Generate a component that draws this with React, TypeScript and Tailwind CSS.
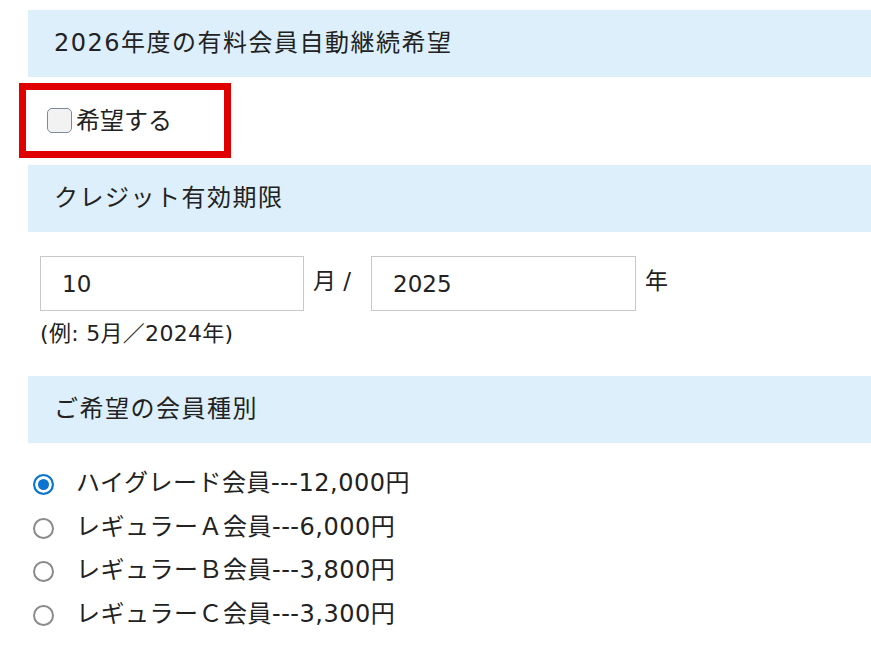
import { useState } from "react";

const plans = [
  { id: "high", label: "ハイグレード会員---12,000円" },
  { id: "a", label: "レギュラーＡ会員---6,000円" },
  { id: "b", label: "レギュラーＢ会員---3,800円" },
  { id: "c", label: "レギュラーＣ会員---3,300円" },
];

function SectionHead({ children }: { children: React.ReactNode }) {
  return (
    <div className="flex h-[67px] items-center bg-[#ddeffa] pb-[2px] pl-[26px] text-[24px] tracking-[1.5px] text-[#222]">
      {children}
    </div>
  );
}

export default function App() {
  const [wish, setWish] = useState(false);
  const [month, setMonth] = useState("10");
  const [year, setYear] = useState("2025");
  const [plan, setPlan] = useState("high");

  return (
    <div
      className="min-h-[645px] w-[871px] overflow-hidden bg-white pl-[28px] pt-[10px] text-[#222]"
      style={{ fontFamily: '"DejaVu Sans", "Noto Sans CJK JP", sans-serif' }}
    >
      <SectionHead>2026年度の有料会員自動継続希望</SectionHead>

      {/* 希望する（赤枠） */}
      <div className="mt-[6px] -ml-[9px] flex h-[75px] w-[212px] items-center border-[7px] border-[#e00000] pl-[21px]">
        <label className="flex cursor-pointer items-center gap-[4px] text-[24px]">
          <input
            type="checkbox"
            checked={wish}
            onChange={(e) => setWish(e.target.checked)}
            className="h-[25px] w-[25px] appearance-none rounded-[5px] border border-[#7a8a9a] bg-[#f2f2f2] checked:bg-[#0a74d0]"
          />
          <span>希望する</span>
        </label>
      </div>

      <div className="mt-[7px]">
        <SectionHead>クレジット有効期限</SectionHead>
      </div>

      <div className="mt-[24px] ml-[12px] flex items-center text-[23px]">
        <input
          value={month}
          onChange={(e) => setMonth(e.target.value)}
          className="h-[55px] w-[264px] border border-[#c8c8c8] px-[21px] text-[23px] outline-none"
        />
        <span className="ml-[9px] mr-[20px] -mt-[4px]">月 /</span>
        <input
          value={year}
          onChange={(e) => setYear(e.target.value)}
          className="h-[55px] w-[265px] border border-[#c8c8c8] px-[21px] text-[23px] outline-none"
        />
        <span className="ml-[9px] -mt-[4px]">年</span>
      </div>
      <p className="mt-[8px] ml-[12px] text-[22px] leading-[30px] tracking-[0.3px]">(例: 5月／2024年)</p>

      <div className="mt-[27px]">
        <SectionHead>ご希望の会員種別</SectionHead>
      </div>

      <div className="mt-[20px] flex flex-col">
        {plans.map((p) => (
          <label key={p.id} className="flex h-[43.5px] cursor-pointer items-center text-[24px] tracking-[0.5px]">
            <input
              type="radio"
              name="plan"
              checked={plan === p.id}
              onChange={() => setPlan(p.id)}
              className="ml-[5px] h-[21px] w-[21px] appearance-none rounded-full border-2 border-[#8a8a8a] bg-white checked:border-[#0a74d0] checked:bg-[#0a74d0] checked:shadow-[inset_0_0_0_3px_#fff]"
            />
            <span className="ml-[22px] -mt-[3px]">{p.label}</span>
          </label>
        ))}
      </div>
    </div>
  );
}
